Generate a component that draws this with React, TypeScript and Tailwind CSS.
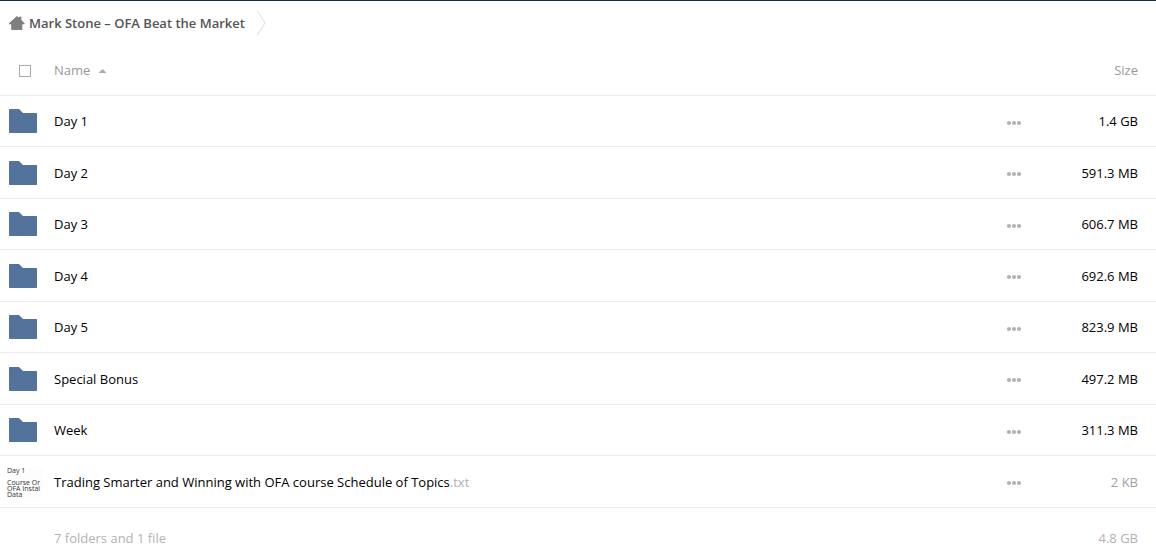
const folders = [
  { name: "Day 1", size: "1.4 GB" },
  { name: "Day 2", size: "591.3 MB" },
  { name: "Day 3", size: "606.7 MB" },
  { name: "Day 4", size: "692.6 MB" },
  { name: "Day 5", size: "823.9 MB" },
  { name: "Special Bonus", size: "497.2 MB" },
  { name: "Week", size: "311.3 MB" },
];

function HomeIcon() {
  return (
    <svg width="16" height="14" viewBox="0 0 16 14" fill="#7f7f7f" aria-hidden="true">
      <path d="M8 0L10 1.8V0.7H12.4V4.1L15.6 7.2V8.2H13.3V14H2.2V8.2H0V7.2Z" />
    </svg>
  );
}

function FolderIcon() {
  return (
    <svg className="block" width="28" height="24" viewBox="0 0 28 24" fill="#54739c" aria-hidden="true">
      <path d="M0.6 0H10L14 4H27.4L28 4.6V23.4L27.4 24H0.6L0 23.4V0.6Z" />
    </svg>
  );
}

function MoreButton({ label }: { label: string }) {
  return (
    <button type="button" aria-label={label} className="block cursor-pointer pt-[3px]">
      <svg className="block" width="16" height="6" viewBox="0 0 16 6" fill="#b2b2b2" aria-hidden="true">
        <circle cx="3" cy="3" r="2.1" />
        <circle cx="8" cy="3" r="2.1" />
        <circle cx="13" cy="3" r="2.1" />
      </svg>
    </button>
  );
}

export default function App() {
  return (
    <main className="border-t border-[#1d2d44] bg-white font-['Open_Sans',sans-serif] text-[13px] leading-5 text-black">
      <nav aria-label="Breadcrumb" className="flex h-11 items-center pl-[9px]">
        <a href="#home" className="flex items-center gap-1 font-semibold text-[#555]">
          <HomeIcon />
          Mark Stone – OFA Beat the Market
        </a>
        <svg className="ml-3" width="9" height="24" viewBox="0 0 9 24" fill="none" stroke="#dddddd" aria-hidden="true">
          <path d="M0.5 0L8 12L0.5 24" />
        </svg>
      </nav>
      <table className="w-full table-fixed border-separate border-spacing-0">
        <colgroup>
          <col className="w-[54px]" />
          <col />
          <col className="w-[50px]" />
          <col className="w-[100px]" />
        </colgroup>
        <thead>
          <tr className="h-[51px] text-[#999] *:border-b *:border-[#ededed] *:p-0 *:font-normal">
            <th scope="col" className="text-left">
              <div className="pt-0.5 pl-[19px]">
                <input
                  type="checkbox"
                  aria-label="Select all"
                  className="block size-3 appearance-none border border-[#aaa] bg-white checked:bg-[#aaa]"
                />
              </div>
            </th>
            <th scope="col" className="text-left">
              <button type="button" className="flex cursor-pointer items-center gap-2">
                Name
                <svg className="mt-0.5" width="9" height="4" viewBox="0 0 9 4" fill="#aaaaaa" aria-hidden="true">
                  <path d="M4.5 0L8.5 4H0.5Z" />
                </svg>
              </button>
            </th>
            <th scope="col" aria-label="Actions" />
            <th scope="col" className="text-right">
              <span className="pr-[18px]">Size</span>
            </th>
          </tr>
        </thead>
        <tbody>
          {folders.map((folder) => (
            <tr
              key={folder.name}
              className="h-[51px] *:border-b *:border-[#ededed] *:p-0 even:h-[52px]"
            >
              <td>
                <div className="pl-[9px]">
                  <FolderIcon />
                </div>
              </td>
              <td>
                <a href="#folder">{folder.name}</a>
              </td>
              <td>
                <MoreButton label={"Actions for " + folder.name} />
              </td>
              <td className="text-right">
                <span className="pr-[18px]">{folder.size}</span>
              </td>
            </tr>
          ))}
          <tr className="h-[52px] *:border-b *:border-[#ededed] *:p-0">
            <td>
              <div className="pt-0.5 pl-[7px]">
                <div className="w-9 bg-[#fdfdfd] text-[7px] leading-[6px] whitespace-pre text-[#333]">
                  {"Day 1\n\nCourse Or\nOFA Instal\nData"}
                </div>
              </div>
            </td>
            <td>
              <a href="#file">
                Trading Smarter and Winning with OFA course Schedule of Topics
                <span className="text-[#b2b2b2]">.txt</span>
              </a>
            </td>
            <td>
              <MoreButton label="Actions for text file" />
            </td>
            <td className="text-right text-[#a0a0a0]">
              <span className="pr-[18px]">2 KB</span>
            </td>
          </tr>
        </tbody>
        <tfoot>
          <tr className="h-[60px] text-[#b2b2b2] *:p-0">
            <td />
            <td>7 folders and 1 file</td>
            <td />
            <td className="text-right">
              <span className="pr-[18px]">4.8 GB</span>
            </td>
          </tr>
        </tfoot>
      </table>
    </main>
  );
}
